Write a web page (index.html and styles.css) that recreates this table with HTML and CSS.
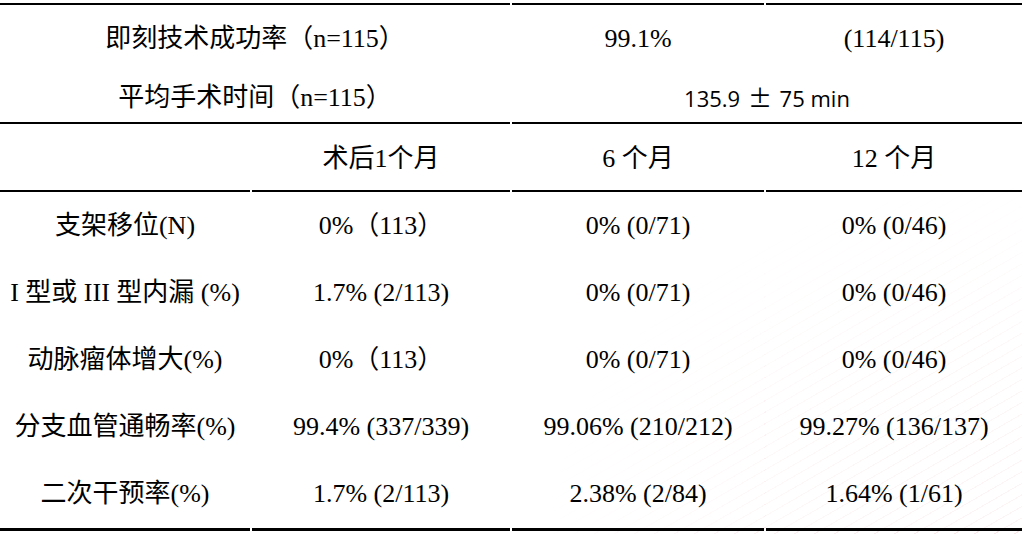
FILE: index.html
```html
<!DOCTYPE html>
<html lang="zh">
<head>
<meta charset="utf-8">
<link rel="stylesheet" href="styles.css">
</head>
<body>
<div class="page">
  <table class="results">
    <colgroup>
      <col class="c1"><col class="c2"><col class="c3"><col class="c4">
    </colgroup>
    <tbody>
      <tr class="summary first">
        <td colspan="2">即刻技术成功率（n=115）</td>
        <td>99.1%</td>
        <td>(114/115)</td>
      </tr>
      <tr class="summary second">
        <td colspan="2">平均手术时间（n=115）</td>
        <td colspan="2" class="sans">135.9 <span class="pm">±</span> 75 min</td>
      </tr>
      <tr class="head">
        <td></td>
        <td>术后1个月</td>
        <td>6 个月</td>
        <td>12 个月</td>
      </tr>
      <tr class="data">
        <td>支架移位(N)</td>
        <td>0%（113）</td>
        <td>0% (0/71)</td>
        <td>0% (0/46)</td>
      </tr>
      <tr class="data">
        <td>I 型或 III 型内漏 (%)</td>
        <td>1.7% (2/113)</td>
        <td>0% (0/71)</td>
        <td>0% (0/46)</td>
      </tr>
      <tr class="data">
        <td>动脉瘤体增大(%)</td>
        <td>0%（113）</td>
        <td>0% (0/71)</td>
        <td>0% (0/46)</td>
      </tr>
      <tr class="data">
        <td>分支血管通畅率(%)</td>
        <td>99.4% (337/339)</td>
        <td>99.06% (210/212)</td>
        <td>99.27% (136/137)</td>
      </tr>
      <tr class="data last">
        <td>二次干预率(%)</td>
        <td>1.7% (2/113)</td>
        <td>2.38% (2/84)</td>
        <td>1.64% (1/61)</td>
      </tr>
    </tbody>
  </table>
</div>
</body>
</html>
```

FILE: styles.css
```css
html, body {
  margin: 0;
  padding: 0;
  background: #ffffff;
}

.page {
  position: relative;
  width: 1022px;
  height: 534px;
  overflow: hidden;
  padding-top: 3px;
  box-sizing: border-box;
}

.page::before {
  content: "";
  position: absolute;
  inset: 0;
  background: repeating-linear-gradient(150deg, transparent 0 9px, rgba(240, 180, 185, 0.35) 9px 10px);
  -webkit-mask-image: radial-gradient(ellipse 650px 480px at 100% 100%, #000 0%, rgba(0,0,0,0.6) 40%, transparent 75%);
  mask-image: radial-gradient(ellipse 650px 480px at 100% 100%, #000 0%, rgba(0,0,0,0.6) 40%, transparent 75%);
  pointer-events: none;
}

.results {
  position: relative;
  margin-left: -2px;
  width: 1026px;
  border-collapse: separate;
  border-spacing: 2px 0;
  table-layout: fixed;
  font-family: "Liberation Serif", "Noto Sans CJK SC", serif;
  font-size: 26px;
  color: #000;
}

.c1 { width: 250px; }
.c2 { width: 258px; }
.c3 { width: 252px; }
.c4 { width: 256px; }

.results td {
  text-align: center;
  vertical-align: middle;
  padding: 0;
  white-space: nowrap;
  line-height: 30px;
  background: rgba(255, 255, 255, 0.55);
  box-sizing: border-box;
}

.summary.first td {
  border-top: 2px solid #000;
  height: 61px;
  padding-top: 9px;
}

.summary.second td {
  height: 60px;
  padding-top: 9px;
  border-bottom: 2px solid #000;
}

.sans {
  font-family: "Open Sans", "Noto Sans CJK SC", sans-serif;
  font-size: 22px;
}

.pm {
  font-family: "Noto Sans CJK SC", sans-serif;
  font-size: 24px;
  font-feature-settings: "fwid";
  margin: 0 2px;
}

.head td {
  height: 68px;
  padding-top: 3px;
  border-bottom: 2px solid #000;
}

.data td {
  height: 67.2px;
}

.data.last td {
  height: 70px;
  border-bottom: 3px solid #000;
}
```
